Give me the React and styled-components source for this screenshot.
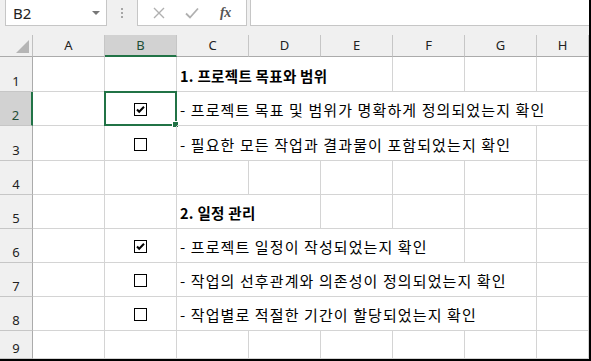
import React from "react";
import styled, { createGlobalStyle } from "styled-components";

const Global = createGlobalStyle`
  html, body { margin: 0; padding: 0; background: #fff; }
  body { font-family: "Noto Sans", "Noto Sans CJK KR", sans-serif; }
`;

const Frame = styled.div`
  width: 591px;
  height: 361px;
  box-sizing: border-box;
  border-right: 2px solid #000;
  border-bottom: 2px solid #000;
  overflow: hidden;
  background: #fff;
  display: flex;
  flex-direction: column;
`;

const Toolbar = styled.div`
  height: 35px;
  flex: none;
  background: #f0f0f0;
  box-sizing: border-box;
  padding-left: 5px;
  display: flex;
  align-items: flex-start;
`;

const NameBox = styled.div`
  width: 102px;
  height: 26px;
  box-sizing: border-box;
  background: #fff;
  border: 1px solid #c6c6c6;
  border-top: none;
  display: flex;
  align-items: center;
  justify-content: space-between;
  padding: 0 6px 0 7px;
  font-family: "Noto Sans", sans-serif;
  font-size: 15px;
  color: #222;
`;

const Caret = styled.span`
  width: 0;
  height: 0;
  border-left: 4px solid transparent;
  border-right: 4px solid transparent;
  border-top: 4px solid #777;
`;

const Grip = styled.div`
  width: 30px;
  height: 26px;
  display: flex;
  flex-direction: column;
  align-items: center;
  justify-content: center;
  gap: 2px;
  & > span {
    width: 2px;
    height: 2px;
    background: #a6a6a6;
  }
`;

const ButtonBox = styled.div`
  width: 110px;
  height: 26px;
  box-sizing: border-box;
  background: #fff;
  border: 1px solid #c6c6c6;
  border-top: none;
  display: flex;
  align-items: center;
  justify-content: space-around;
  padding: 0 4px;
`;

const IconBtn = styled.span`
  width: 28px;
  display: flex;
  align-items: center;
  justify-content: center;
  color: ${(p) => (p.$active ? "#555" : "#b0b0b0")};
`;

const Fx = styled.span`
  font-family: "Liberation Serif", serif;
  font-style: italic;
  font-weight: bold;
  font-size: 14px;
  color: #555;
  letter-spacing: -0.5px;
`;

const FormulaInput = styled.div`
  flex: 1;
  margin-left: 3px;
  height: 26px;
  box-sizing: border-box;
  background: #fff;
  border: 1px solid #c6c6c6;
  border-top: none;
  border-right: none;
`;

const Sheet = styled.div`
  flex: 1;
  display: grid;
  grid-template-columns: 33px repeat(7, 72px) 1fr;
  grid-template-rows: 22px 35px 34px 35px 34px 34px 34px 34px 34px 1fr;
`;

const Corner = styled.div`
  background: #f0f0f0;
  border-right: 1px solid #c0c0c0;
  border-bottom: 1px solid #ababab;
  position: relative;
  &::after {
    content: "";
    position: absolute;
    right: 3px;
    bottom: 3px;
    width: 0;
    height: 0;
    border-left: 13px solid transparent;
    border-bottom: 13px solid #b5b5b5;
  }
`;

const ColHead = styled.div`
  box-sizing: border-box;
  background: ${(p) => (p.$sel ? "#d2d2d2" : "#f0f0f0")};
  border-right: 1px solid #c6c6c6;
  border-bottom: ${(p) => (p.$sel ? "2px solid #217346" : "1px solid #ababab")};
  display: flex;
  align-items: center;
  justify-content: center;
  font-family: "Noto Sans", sans-serif;
  font-size: 13px;
  color: ${(p) => (p.$sel ? "#1f4e36" : "#222")};
  padding-bottom: ${(p) => (p.$sel ? "0" : "1px")};
`;

const RowHead = styled.div`
  box-sizing: border-box;
  background: ${(p) => (p.$sel ? "#d2d2d2" : "#f0f0f0")};
  border-right: ${(p) => (p.$sel ? "2px solid #217346" : "1px solid #ababab")};
  border-bottom: 1px solid #c6c6c6;
  display: flex;
  align-items: flex-end;
  justify-content: center;
  padding-bottom: 1px;
  font-family: "Noto Sans", sans-serif;
  font-size: 13px;
  color: ${(p) => (p.$sel ? "#1f4e36" : "#222")};
`;

const Cell = styled.div`
  box-sizing: border-box;
  border-right: 1px solid #d4d4d4;
  border-bottom: 1px solid #d4d4d4;
  grid-column: ${(p) => (p.$span ? `span ${p.$span}` : "auto")};
  display: flex;
  align-items: center;
  justify-content: ${(p) => (p.$center ? "center" : "flex-start")};
  padding-left: ${(p) => (p.$center ? "0" : "3px")};
  padding-top: 2px;
  position: relative;
  white-space: nowrap;
  font-family: "Noto Sans CJK KR", "Noto Sans", sans-serif;
  font-size: ${(p) => (p.$bold ? "14.5px" : "15px")};
  letter-spacing: ${(p) => (p.$bold ? "0.3px" : "1.1px")};
  font-weight: ${(p) => (p.$bold ? 700 : 400)};
  color: #000;
`;

const Selection = styled.div`
  position: absolute;
  left: -1px;
  top: -1px;
  right: -1px;
  bottom: -1px;
  border: 2px solid #217346;
  pointer-events: none;
  &::after {
    content: "";
    position: absolute;
    right: -4px;
    bottom: -4px;
    width: 5px;
    height: 5px;
    background: #217346;
    border: 1px solid #fff;
  }
`;

const Box = ({ checked }) => (
  <svg width="13" height="13" viewBox="0 0 13 13">
    <rect x="0.5" y="0.5" width="12" height="12" fill="#fff" stroke="#000" strokeWidth="1" />
    {checked && (
      <path d="M3 6.5 L5.2 8.8 L10 3.8" fill="none" stroke="#000" strokeWidth="2" />
    )}
  </svg>
);

const XIcon = () => (
  <svg width="12" height="12" viewBox="0 0 12 12">
    <path d="M1 1 L11 11 M11 1 L1 11" stroke="currentColor" strokeWidth="1.4" />
  </svg>
);
const CheckIcon = () => (
  <svg width="14" height="12" viewBox="0 0 14 12">
    <path d="M1 6.5 L5 10.5 L13 1.5" fill="none" stroke="currentColor" strokeWidth="1.8" />
  </svg>
);

const rows = [
  { n: 1, check: null, text: "1. 프로젝트 목표와 범위", bold: true, span: 3 },
  { n: 2, check: true, text: "- 프로젝트 목표 및 범위가 명확하게 정의되었는지 확인", span: 6, sel: true },
  { n: 3, check: false, text: "- 필요한 모든 작업과 결과물이 포함되었는지 확인", span: 5 },
  { n: 4, check: null, text: null },
  { n: 5, check: null, text: "2. 일정 관리", bold: true, span: 2 },
  { n: 6, check: true, text: "- 프로젝트 일정이 작성되었는지 확인", span: 4 },
  { n: 7, check: false, text: "- 작업의 선후관계와 의존성이 정의되었는지 확인", span: 5 },
  { n: 8, check: false, text: "- 작업별로 적절한 기간이 할당되었는지 확인", span: 5 },
  { n: 9, check: null, text: null },
];

const cols = ["A", "B", "C", "D", "E", "F", "G", "H"];

export default function App() {
  return (
    <>
      <Global />
      <Frame>
        <Toolbar>
          <NameBox>
            <span>B2</span>
            <Caret />
          </NameBox>
          <Grip>
            <span />
            <span />
            <span />
          </Grip>
          <ButtonBox>
            <IconBtn><XIcon /></IconBtn>
            <IconBtn><CheckIcon /></IconBtn>
            <IconBtn $active><Fx>fx</Fx></IconBtn>
          </ButtonBox>
          <FormulaInput />
        </Toolbar>
        <Sheet>
          <Corner />
          {cols.map((c) => (
            <ColHead key={c} $sel={c === "B"}>{c}</ColHead>
          ))}
          {rows.map((r) => {
            const used = r.text ? 2 + r.span : 2;
            const rest = 8 - used;
            return (
              <React.Fragment key={r.n}>
                <RowHead $sel={r.sel}>{r.n}</RowHead>
                <Cell />
                <Cell $center>
                  {r.check !== null && <Box checked={r.check} />}
                  {r.sel && <Selection />}
                </Cell>
                {r.text && (
                  <Cell $span={r.span} $bold={r.bold}>{r.text}</Cell>
                )}
                {Array.from({ length: rest }).map((_, i) => (
                  <Cell key={i} />
                ))}
              </React.Fragment>
            );
          })}
        </Sheet>
      </Frame>
    </>
  );
}
